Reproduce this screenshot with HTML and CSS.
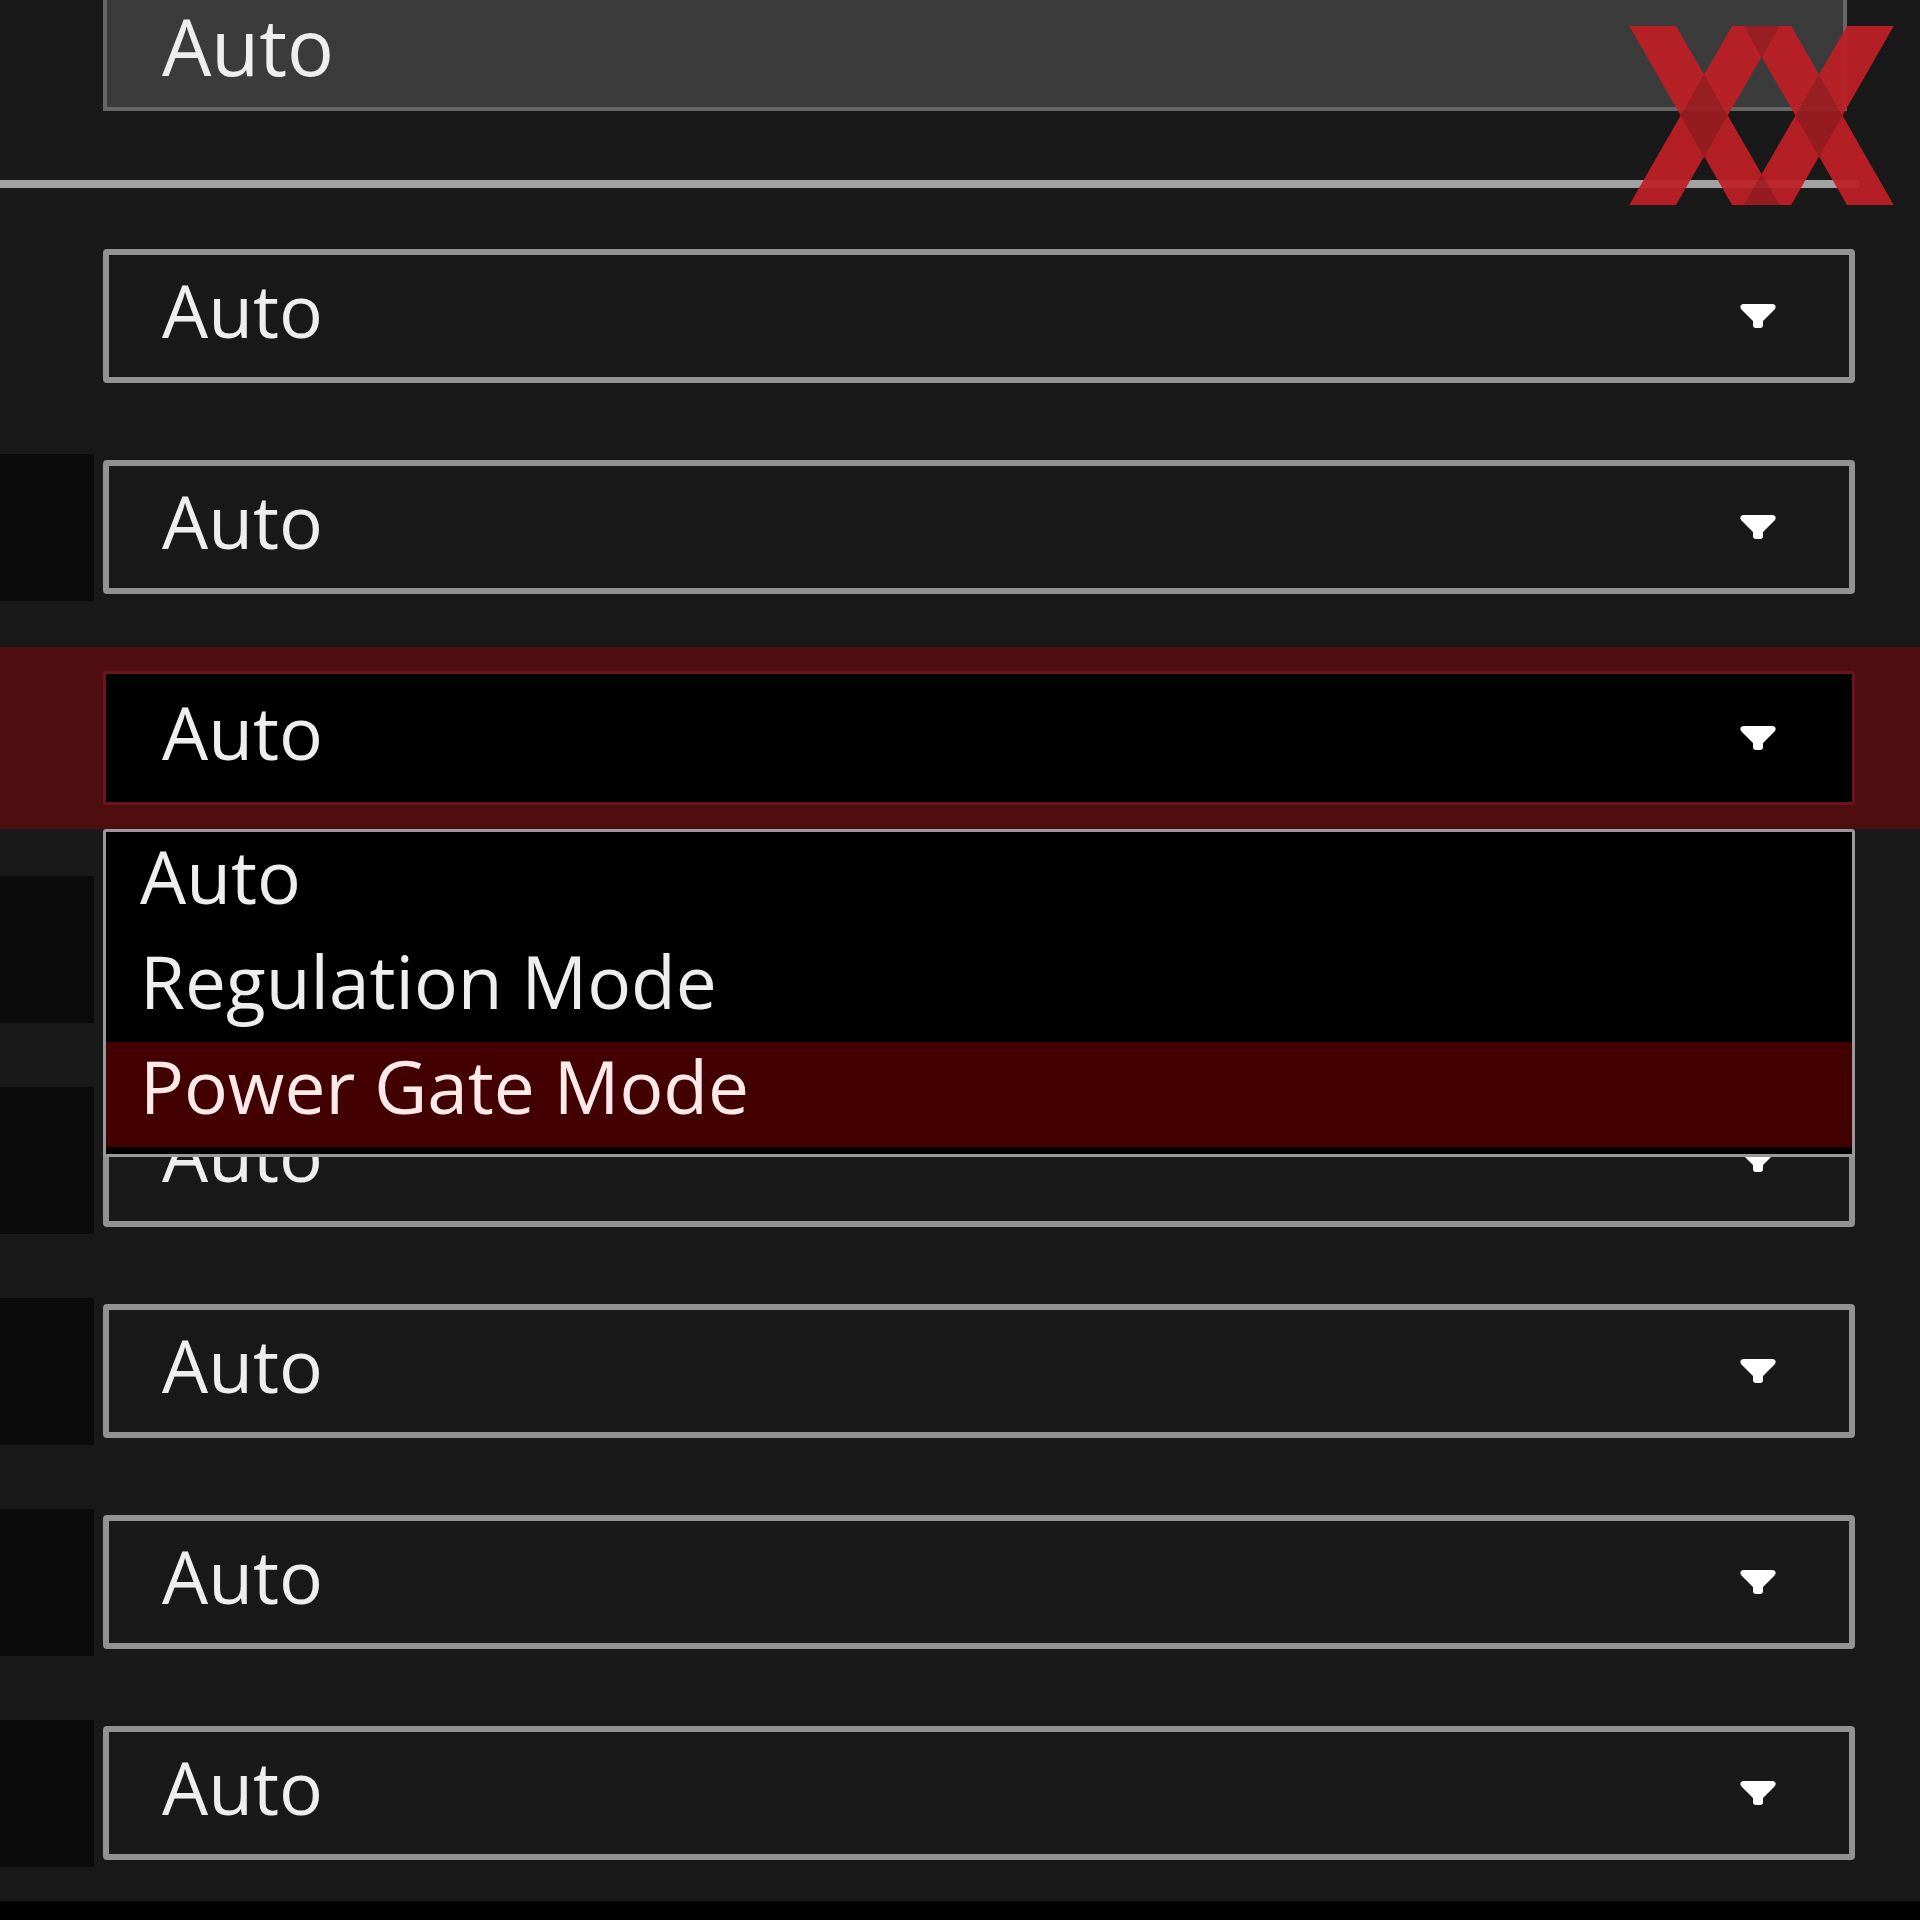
FILE: index.html
```
<!DOCTYPE html>
<html lang="en">
<head>
<meta charset="UTF-8">
<meta name="viewport" content="width=device-width, initial-scale=1">
<title>BIOS Settings</title>

<link rel="stylesheet" href="styles.css">

</head>
<body>

<svg class="logo" viewBox="90 78 792 536" aria-hidden="true">
	<g class="logoBand">
		<path d="M90 78H230L540 614H398Z"/>
		<path d="M398 78H540L230 614H90Z"/>
		<path d="M433 78H575L882 614H742Z"/>
		<path d="M742 78H882L575 614H433Z"/>
	</g>
	<g class="logoCross">
		<path d="M314 225L384 347L314 468L243 347Z"/>
		<path d="M658 225L728 347L658 468L587 347Z"/>
		<path d="M433 78H540L486 172Z"/>
		<path d="M433 614H540L486 522Z"/>
	</g>
</svg>

<!-- arrow used by every drop-down -->
<svg class="defs" aria-hidden="true">
	<symbol id="arrow" viewBox="0 0 38 24">
		<path d="M4 0H34Q38 1 36 5L24 17V21Q24 24 21 24H17Q14 24 14 21V17L2 5Q0 1 4 0Z"/>
	</symbol>
</svg>

<form class="settings">
	<div class="row first">
		<input type="text" class="field" value="Auto" aria-label="Value" readonly>
	</div>

	<hr class="line">

	<div class="row">
		<div class="combo">
			<select aria-label="Setting 1"><option>Auto</option></select>
			<svg class="arrow"><use href="#arrow"/></svg>
		</div>
	</div>

	<div class="row">
		<div class="cell"></div>
		<div class="combo">
			<select aria-label="Setting 2"><option>Auto</option></select>
			<svg class="arrow"><use href="#arrow"/></svg>
		</div>
	</div>

	<!-- opened row -->
	<div class="row active">
		<div class="combo">
			<select aria-label="Setting 3">
				<option>Auto</option>
				<option>Regulation Mode</option>
				<option>Power Gate Mode</option>
			</select>
			<svg class="arrow"><use href="#arrow"/></svg>
		</div>
		<ul class="menu" role="listbox" aria-label="Setting 3 options">
			<li role="option">Auto</li>
			<li role="option">Regulation Mode</li>
			<li role="option" class="selected" aria-selected="true">Power Gate Mode</li>
		</ul>
	</div>

	<div class="row">
		<div class="cell"></div>
		<div class="combo">
			<select aria-label="Setting 4"><option>Auto</option></select>
			<svg class="arrow"><use href="#arrow"/></svg>
		</div>
	</div>

	<div class="row">
		<div class="cell"></div>
		<div class="combo">
			<select aria-label="Setting 5"><option>Auto</option></select>
			<svg class="arrow"><use href="#arrow"/></svg>
		</div>
	</div>

	<div class="row">
		<div class="cell"></div>
		<div class="combo">
			<select aria-label="Setting 6"><option>Auto</option></select>
			<svg class="arrow"><use href="#arrow"/></svg>
		</div>
	</div>

	<div class="row">
		<div class="cell"></div>
		<div class="combo">
			<select aria-label="Setting 7"><option>Auto</option></select>
			<svg class="arrow"><use href="#arrow"/></svg>
		</div>
	</div>

	<div class="row">
		<div class="cell"></div>
		<div class="combo">
			<select aria-label="Setting 8"><option>Auto</option></select>
			<svg class="arrow"><use href="#arrow"/></svg>
		</div>
	</div>
</form>

</body>
</html>
```

FILE: styles.css
```
* {box-sizing: border-box;}
body {margin: 0; background-color: #000000; color: #eeeeee; font-family: "Open Sans", "Noto Sans", sans-serif; font-size: 73px;}

.settings {padding-bottom: 17px; background-color: #191919;}

/* rows */
.row {position: relative; display: grid; grid-template-columns: 94px 1fr; column-gap: 9px; align-items: center; height: 182px; margin-bottom: 29px; padding-right: 65px;}
.row:last-child {margin-bottom: 0;}
.first {height: 111px; margin-bottom: 69px; padding-right: 73px;}
.active {background-color: #4e0d0f;}
.cell {height: 147px; background-color: #0b0b0b;}
.line {height: 8px; margin: 0 60px 37px 0; border: 0; border-radius: 0 4px 4px 0; background-color: #a3a3a3;}

/* controls */
.field {grid-column: 2; width: 100%; height: 111px; margin: 0; padding: 0 55px 16px; border: 4px solid #666666; border-top: 0; border-radius: 0; background-color: #3b3b3b; color: inherit; font-family: inherit; font-size: 78px; outline: none;}
.combo {grid-column: 2; display: grid; align-items: center;}
.combo select {grid-area: 1 / 1; width: 100%; height: 134px; margin: 0; padding: 0 53px 14px; border: 6px solid #929292; border-radius: 4px; background-color: #191919; color: inherit; font-family: inherit; font-size: inherit; appearance: none; outline: none;}
.active .combo select {padding: 0 56px 14px; border: 3px solid #6b1420; border-radius: 2px; background-color: #000000;}
.arrow {grid-area: 1 / 1; justify-self: end; width: 38px; height: 24px; margin-right: 78px; fill: #ffffff; pointer-events: none;}

/* option list under the opened row */
.menu {position: absolute; z-index: 1; top: 100%; left: 103px; right: 65px; margin: 0; padding: 0 0 7px; border: 3px solid #999999; border-radius: 3px; background-color: #000000; list-style: none;}
.menu li {height: 105px; padding-left: 34px; line-height: 87px;}
.menu .selected {background-color: #430000; color: #ffe9e9;}

.logo {position: absolute; z-index: 2; top: 26px; right: 26px; width: 265px; height: 179px; opacity: 0.93;}
.logoBand {fill: #bf2026;}
.logoCross {fill: #9e1c20;}
.defs {position: absolute; width: 0; height: 0;}
```
